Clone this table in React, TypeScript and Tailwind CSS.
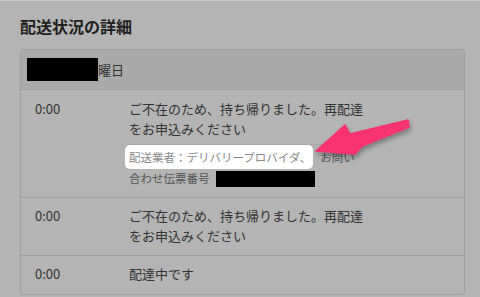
const jp = { fontFamily: '"Noto Sans CJK JP", "Noto Sans", sans-serif' }

function TimeRow({ time, className, children }: { time: string; className: string; children: React.ReactNode }) {
  return (
    <div className={`flex border-t border-[#9f9f9f] text-[13px] leading-5 text-[#333] ${className}`}>
      <div className="w-[108px] shrink-0 pl-[14px]">{time}</div>
      <div className="flex-1">{children}</div>
    </div>
  )
}

function Arrow() {
  return (
    <svg className="absolute left-0 top-0 pointer-events-none" width="480" height="297" viewBox="0 0 480 297">
      <defs>
        <filter id="shade" x="-20%" y="-40%" width="140%" height="180%">
          <feDropShadow dx="1" dy="3" stdDeviation="2.5" floodColor="#000" floodOpacity="0.35" />
        </filter>
      </defs>
      <polygon
        points="316,150 345,124 350,133 408,119 409,126 362,145 355,153"
        fill="#f7316f"
        stroke="#f7316f"
        strokeWidth="1.5"
        strokeLinejoin="round"
        filter="url(#shade)"
      />
    </svg>
  )
}

export default function App() {
  return (
    <div className="relative h-[297px] w-[480px] overflow-hidden border-t border-[#cdcdcd] bg-[#b4b4b4]" style={jp}>
      <div className="px-5 pt-[13px]">
        <h1 className="mb-[11px] text-[16px] font-bold leading-6 text-[#1f1f1f]">配送状況の詳細</h1>
        <div className="w-[445px] rounded-[3px] border border-[#9f9f9f]">
          <div className="flex h-[39px] items-center rounded-t-[3px] bg-[#aaaaaa] pl-[6px] text-[13px] text-[#333]">
            <span className="inline-block h-[23px] w-[71px] bg-black" />
            <span>曜日</span>
          </div>

          <TimeRow time="0:00" className="pt-[9px] pb-[8px]">
            <p>ご不在のため、持ち帰りました。再配達</p>
            <p>をお申込みください</p>
            <div className="mt-[5px] h-px w-[210px] bg-[#a7a7a7]" />
            <div className="mt-[2px] text-[11.5px] leading-[21px] text-[#555]">
              <p>
                <span className="-ml-[4px] rounded-[5px] bg-white py-[4px] pl-[4px] pr-[2px] text-[#8a8a8a]">
                  配送業者：デリバリープロバイダ、
                </span>
                <span className="ml-[7px]">お問い</span>
              </p>
              <p className="flex items-center">
                合わせ伝票番号
                <span className="ml-[6px] inline-block h-[16px] w-[99px] bg-black" />
              </p>
            </div>
          </TimeRow>

          <TimeRow time="0:00" className="pt-[8px] pb-[9px]">
            <p>ご不在のため、持ち帰りました。再配達</p>
            <p>をお申込みください</p>
          </TimeRow>

          <TimeRow time="0:00" className="pt-[8px] pb-[10px]">
            <p>配達中です</p>
          </TimeRow>
        </div>
      </div>
      <Arrow />
    </div>
  )
}
